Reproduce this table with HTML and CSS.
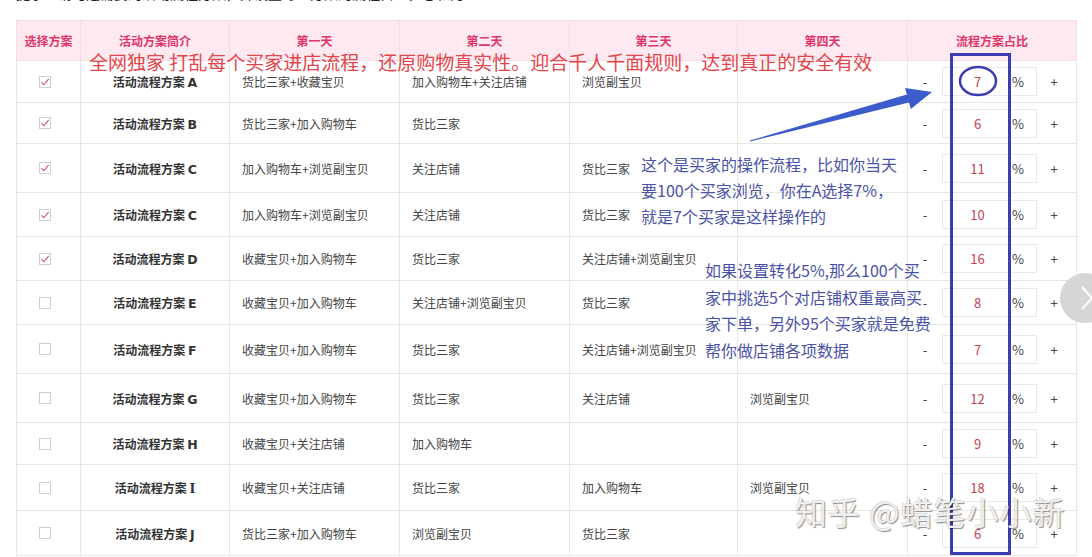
FILE: index.html
```html
<!DOCTYPE html>
<html lang="zh-CN">
<head>
<meta charset="utf-8">
<title>流程方案</title>
<link rel="stylesheet" href="styles.css">
</head>
<body>
<div class="page">
  <div class="notice"><p>提示：请勾选需要的活动流程方案，并设置每个方案的流程占比，总和为100%</p></div>
  <table class="plan">
    <colgroup>
      <col class="w-sel"><col class="w-name"><col class="w-day"><col class="w-day"><col class="w-day3"><col class="w-day"><col class="w-ratio">
    </colgroup>
    <thead>
      <tr><th>选择方案</th><th>活动方案简介</th><th>第一天</th><th>第二天</th><th>第三天</th><th>第四天</th><th>流程方案占比</th></tr>
    </thead>
    <tbody>
      <tr><td class="sel"><span class="cb on"></span></td><td class="name">活动流程方案 <b>A</b></td><td class="day">货比三家+收藏宝贝</td><td class="day">加入购物车+关注店铺</td><td class="day">浏览副宝贝</td><td class="day"></td><td class="ratio"><div class="ctl"><span class="op">-</span><span class="box"><span class="num">7</span><span class="pct">%</span></span><span class="op">+</span></div></td></tr>
      <tr><td class="sel"><span class="cb on"></span></td><td class="name">活动流程方案 <b>B</b></td><td class="day">货比三家+加入购物车</td><td class="day">货比三家</td><td class="day"></td><td class="day"></td><td class="ratio"><div class="ctl"><span class="op">-</span><span class="box"><span class="num">6</span><span class="pct">%</span></span><span class="op">+</span></div></td></tr>
      <tr><td class="sel"><span class="cb on"></span></td><td class="name">活动流程方案 <b>C</b></td><td class="day">加入购物车+浏览副宝贝</td><td class="day">关注店铺</td><td class="day">货比三家</td><td class="day"></td><td class="ratio"><div class="ctl"><span class="op">-</span><span class="box"><span class="num">11</span><span class="pct">%</span></span><span class="op">+</span></div></td></tr>
      <tr><td class="sel"><span class="cb on"></span></td><td class="name">活动流程方案 <b>C</b></td><td class="day">加入购物车+浏览副宝贝</td><td class="day">关注店铺</td><td class="day">货比三家</td><td class="day"></td><td class="ratio"><div class="ctl"><span class="op">-</span><span class="box"><span class="num">10</span><span class="pct">%</span></span><span class="op">+</span></div></td></tr>
      <tr><td class="sel"><span class="cb on"></span></td><td class="name">活动流程方案 <b>D</b></td><td class="day">收藏宝贝+加入购物车</td><td class="day">货比三家</td><td class="day">关注店铺+浏览副宝贝</td><td class="day"></td><td class="ratio"><div class="ctl"><span class="op">-</span><span class="box"><span class="num">16</span><span class="pct">%</span></span><span class="op">+</span></div></td></tr>
      <tr><td class="sel"><span class="cb"></span></td><td class="name">活动流程方案 <b>E</b></td><td class="day">收藏宝贝+加入购物车</td><td class="day">关注店铺+浏览副宝贝</td><td class="day">货比三家</td><td class="day"></td><td class="ratio"><div class="ctl"><span class="op">-</span><span class="box"><span class="num">8</span><span class="pct">%</span></span><span class="op">+</span></div></td></tr>
      <tr><td class="sel"><span class="cb"></span></td><td class="name">活动流程方案 <b>F</b></td><td class="day">收藏宝贝+加入购物车</td><td class="day">货比三家</td><td class="day">关注店铺+浏览副宝贝</td><td class="day"></td><td class="ratio"><div class="ctl"><span class="op">-</span><span class="box"><span class="num">7</span><span class="pct">%</span></span><span class="op">+</span></div></td></tr>
      <tr><td class="sel"><span class="cb"></span></td><td class="name">活动流程方案 <b>G</b></td><td class="day">收藏宝贝+加入购物车</td><td class="day">货比三家</td><td class="day">关注店铺</td><td class="day">浏览副宝贝</td><td class="ratio"><div class="ctl"><span class="op">-</span><span class="box"><span class="num">12</span><span class="pct">%</span></span><span class="op">+</span></div></td></tr>
      <tr><td class="sel"><span class="cb"></span></td><td class="name">活动流程方案 <b>H</b></td><td class="day">收藏宝贝+关注店铺</td><td class="day">加入购物车</td><td class="day"></td><td class="day"></td><td class="ratio"><div class="ctl"><span class="op">-</span><span class="box"><span class="num">9</span><span class="pct">%</span></span><span class="op">+</span></div></td></tr>
      <tr><td class="sel"><span class="cb"></span></td><td class="name">活动流程方案 <b class="serif">I</b></td><td class="day">收藏宝贝+关注店铺</td><td class="day">货比三家</td><td class="day">加入购物车</td><td class="day">浏览副宝贝</td><td class="ratio"><div class="ctl"><span class="op">-</span><span class="box"><span class="num">18</span><span class="pct">%</span></span><span class="op">+</span></div></td></tr>
      <tr><td class="sel"><span class="cb"></span></td><td class="name">活动流程方案 <b>J</b></td><td class="day">货比三家+加入购物车</td><td class="day">浏览副宝贝</td><td class="day">货比三家</td><td class="day"></td><td class="ratio"><div class="ctl"><span class="op">-</span><span class="box"><span class="num">6</span><span class="pct">%</span></span><span class="op">+</span></div></td></tr>
    </tbody>
  </table>

  <div class="anno-red">全网独家 打乱每个买家进店流程，还原购物真实性。迎合千人千面规则，达到真正的安全有效</div>

  <svg class="anno-svg" width="1092" height="557" viewBox="0 0 1092 557">
    <rect x="951.5" y="54.5" width="58" height="499" fill="none" stroke="#3b3db0" stroke-width="3"/>
    <ellipse cx="978" cy="81" rx="18" ry="14" fill="none" stroke="#3b3db0" stroke-width="2.5"/>
    <polygon points="749.9,140.5 906.9,94.6 905,87.9 932,92 910.8,109.1 908.9,102.4 750.1,141.5" fill="#3c5ccc"/>
  </svg>

  <div class="anno-blue one">这个是买家的操作流程，比如你当天<br>要100个买家浏览，你在A选择7%，<br>就是7个买家是这样操作的</div>
  <div class="anno-blue two">如果设置转化5%,那么100个买<br>家中挑选5个对店铺权重最高买<br>家下单，另外95个买家就是免费<br>帮你做店铺各项数据</div>

  <div class="watermark">知乎 @蜡笔小小新</div>

  <div class="next-btn">
    <svg width="14" height="26" viewBox="0 0 14 26"><polyline points="2,2 12,13 2,24" fill="none" stroke="#ffffff" stroke-width="2"/></svg>
  </div>
</div>
</body>
</html>
```

FILE: styles.css
```css
* { box-sizing: border-box; }
html, body { margin: 0; padding: 0; background: #ffffff; }
body {
  font-family: "Noto Sans CJK SC", "Noto Sans", sans-serif;
  color: #333333;
}
.page {
  position: relative;
  width: 1092px;
  height: 557px;
  overflow: hidden;
}
.notice {
  height: 20px;
  overflow: hidden;
  padding-left: 16px;
}
.notice p {
  margin: -17px 0 0;
  font-size: 14px;
  line-height: 20px;
  color: #222222;
  white-space: nowrap;
}

.plan {
  margin-left: 16px;
  width: 1060px;
  border-collapse: collapse;
  table-layout: fixed;
  font-size: 12px;
}
.w-sel { width: 64px; }
.w-name { width: 149px; }
.w-day { width: 170px; }
.w-day3 { width: 168px; }
.w-ratio { width: 169px; }

.plan th, .plan td {
  border: 1px solid #e6e6e6;
  padding: 0;
  vertical-align: middle;
}
.plan th {
  background: #fde9ef;
  border-color: #f3dde4;
  color: #e0356a;
  font-weight: bold;
  height: 40px;
  text-align: center;
}
.plan tbody tr:nth-child(1) td { height: 42px; }
.plan tbody tr:nth-child(2) td { height: 41px; }
.plan tbody tr:nth-child(3) td { height: 49px; }
.plan tbody tr:nth-child(4) td { height: 44px; }
.plan tbody tr:nth-child(5) td { height: 44px; }
.plan tbody tr:nth-child(6) td { height: 44px; }
.plan tbody tr:nth-child(7) td { height: 49px; }
.plan tbody tr:nth-child(8) td { height: 49px; }
.plan tbody tr:nth-child(9) td { height: 42px; }
.plan tbody tr:nth-child(10) td { height: 46px; }
.plan tbody tr:nth-child(11) td { height: 45px; }

.sel { padding-left: 22px !important; }
.cb {
  display: block;
  position: relative;
  width: 12px;
  height: 12px;
  border: 1px solid #cfcfcf;
  background: #fff;
}
.cb.on::after {
  content: "";
  position: absolute;
  left: 3px;
  top: 0px;
  width: 3px;
  height: 7px;
  border-right: 1.5px solid #d2457c;
  border-bottom: 1.5px solid #d2457c;
  transform: rotate(40deg);
}
.name {
  text-align: center;
  font-weight: bold;
  color: #333;
}
.name b {
  font-family: "DejaVu Sans", "Noto Sans", sans-serif;
  font-size: 12.5px;
}
.name b.serif {
  font-family: "DejaVu Serif", "Liberation Serif", serif;
}
.day {
  padding-left: 12px !important;
  color: #444;
}
.ctl {
  display: flex;
  align-items: center;
}
.op {
  width: 34px;
  text-align: center;
  color: #444;
  font-size: 13px;
}
.ctl .op:last-child { width: 30px; margin-left: 2px; }
.box {
  display: flex;
  align-items: center;
  width: 95px;
  height: 29px;
  border: 1px solid #e8e8e8;
}
.num {
  width: 69px;
  text-align: center;
  color: #c8414f;
  font-size: 13px;
}
.pct { color: #444; font-size: 13px; }

.anno-red {
  position: absolute;
  left: 89px;
  top: 50px;
  font-size: 19px;
  line-height: 24px;
  letter-spacing: 0;
  color: #e2464b;
  white-space: nowrap;
}
.anno-svg {
  position: absolute;
  left: 0;
  top: 0;
  pointer-events: none;
}
.anno-blue {
  position: absolute;
  font-size: 16px;
  color: #4a53a8;
  white-space: nowrap;
}
.anno-blue.one {
  left: 641px;
  top: 151px;
  line-height: 26px;
}
.anno-blue.two {
  left: 705px;
  top: 257px;
  line-height: 26.5px;
}
.watermark {
  position: absolute;
  left: 795px;
  top: 491px;
  font-size: 32px;
  line-height: 40px;
  letter-spacing: 1px;
  color: #efefef;
  white-space: nowrap;
  text-shadow: 1px 1px 1px rgba(0, 0, 0, 0.45), -1px -1px 0 rgba(0, 0, 0, 0.12);
}
.next-btn {
  position: absolute;
  left: 1060px;
  top: 273px;
  width: 50px;
  height: 50px;
  border-radius: 50%;
  background: #d6d6d6;
  display: flex;
  align-items: center;
  padding-left: 20px;
}
```
